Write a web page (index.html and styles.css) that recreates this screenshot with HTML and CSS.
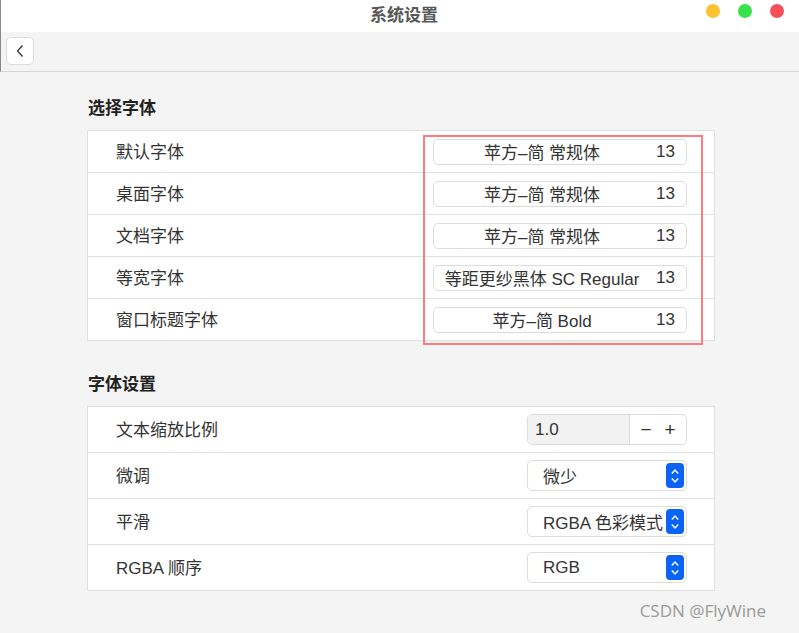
FILE: index.html
```html
<!DOCTYPE html>
<html lang="zh-CN">
<head>
<meta charset="utf-8">
<title>系统设置</title>
<link rel="stylesheet" href="styles.css">
</head>
<body>
<div class="window">
  <header class="titlebar">
    <div class="title">系统设置</div>
    <div class="lights">
      <span class="light yellow"></span>
      <span class="light green"></span>
      <span class="light red"></span>
    </div>
  </header>
  <div class="toolbar">
    <button class="back" aria-label="返回">
      <svg width="10" height="14" viewBox="0 0 10 14"><path d="M7.5 1.5 L2.5 7 L7.5 12.5" fill="none" stroke="#333" stroke-width="1.3"/></svg>
    </button>
  </div>
  <main class="content">
    <h2 class="section-title">选择字体</h2>
    <div class="card fonts-card">
      <div class="row font-row"><span class="label">默认字体</span><div class="font-btn"><span class="fname">苹方–简 常规体</span><span class="fsize">13</span></div></div>
      <div class="row font-row"><span class="label">桌面字体</span><div class="font-btn"><span class="fname">苹方–简 常规体</span><span class="fsize">13</span></div></div>
      <div class="row font-row"><span class="label">文档字体</span><div class="font-btn"><span class="fname">苹方–简 常规体</span><span class="fsize">13</span></div></div>
      <div class="row font-row"><span class="label">等宽字体</span><div class="font-btn"><span class="fname">等距更纱黑体 SC Regular</span><span class="fsize">13</span></div></div>
      <div class="row font-row"><span class="label">窗口标题字体</span><div class="font-btn"><span class="fname">苹方–简 Bold</span><span class="fsize">13</span></div></div>
      <div class="highlight"></div>
    </div>

    <h2 class="section-title second">字体设置</h2>
    <div class="card">
      <div class="row set-row"><span class="label">文本缩放比例</span>
        <div class="spin"><span class="spin-value">1.0</span><span class="spin-btns"><span>−</span><span>+</span></span></div>
      </div>
      <div class="row set-row"><span class="label">微调</span>
        <div class="select"><span class="sel-text">微少</span><span class="sel-arrow"><svg width="10" height="20" viewBox="0 0 10 20"><path d="M1.8 7.5 L5 4 L8.2 7.5 M1.8 12.5 L5 16 L8.2 12.5" fill="none" stroke="#fff" stroke-width="1.4"/></svg></span></div>
      </div>
      <div class="row set-row"><span class="label">平滑</span>
        <div class="select"><span class="sel-text">RGBA 色彩模式</span><span class="sel-arrow"><svg width="10" height="20" viewBox="0 0 10 20"><path d="M1.8 7.5 L5 4 L8.2 7.5 M1.8 12.5 L5 16 L8.2 12.5" fill="none" stroke="#fff" stroke-width="1.4"/></svg></span></div>
      </div>
      <div class="row set-row"><span class="label">RGBA 顺序</span>
        <div class="select"><span class="sel-text">RGB</span><span class="sel-arrow"><svg width="10" height="20" viewBox="0 0 10 20"><path d="M1.8 7.5 L5 4 L8.2 7.5 M1.8 12.5 L5 16 L8.2 12.5" fill="none" stroke="#fff" stroke-width="1.4"/></svg></span></div>
      </div>
    </div>
  </main>
  <div class="watermark">CSDN @FlyWine</div>
</div>
</body>
</html>
```

FILE: styles.css
```css
* { box-sizing: border-box; }
html, body { margin: 0; padding: 0; }
body {
  width: 799px;
  height: 633px;
  overflow: hidden;
  background: #f4f4f4;
  font-family: "Liberation Sans", "Noto Sans CJK SC", sans-serif;
  color: #333;
}
.window {
  position: relative;
  height: 633px;
}
.titlebar {
  height: 32px;
  background: #fff;
  display: flex;
  align-items: center;
  justify-content: center;
  position: relative;
  border-left: 1px solid #8a8a8a;
}
.title {
  font-size: 17px;
  font-weight: bold;
  color: #585858;
  padding-left: 8px;
  line-height: 32px;
}
.lights {
  position: absolute;
  right: 15px;
  top: 4px;
  display: flex;
  gap: 18px;
}
.light {
  width: 14px;
  height: 14px;
  border-radius: 50%;
  display: block;
}
.yellow { background: #fdc232; }
.green { background: #38e24a; }
.red { background: #f54f59; }
.toolbar {
  height: 40px;
  background: #f4f4f4;
  border-bottom: 1px solid #d6d6d6;
  border-left: 1px solid #8a8a8a;
  padding: 5px 0 0 5px;
}
.back {
  width: 28px;
  height: 28px;
  background: #fff;
  border: 1px solid #dedede;
  border-radius: 5px;
  padding: 0;
  display: flex;
  align-items: center;
  justify-content: center;
}
.content {
  padding: 24px 0 0 87px;
  width: 715px;
}
.section-title {
  margin: 0 0 10px 1px;
  padding-top: 2px;
  font-size: 17px;
  font-weight: bold;
  line-height: 22px;
  color: #222;
}
.section-title.second {
  margin-top: 31px;
  margin-bottom: 10px;
}
.card {
  position: relative;
  background: #fff;
  border: 1px solid #e0e0e0;
}
.row {
  display: flex;
  align-items: center;
  justify-content: space-between;
  padding: 0 27px 0 28px;
  border-top: 1px solid #e0e0e0;
}
.row:first-child { border-top: none; }
.font-row { height: 42px; }
.font-row:first-child { height: 41px; }
.set-row { height: 46px; }
.set-row:first-child { height: 45px; }
.label {
  font-size: 17px;
  color: #333;
  line-height: 20px;
  padding-top: 2px;
}
.set-row .label { padding-top: 3px; }
.font-btn {
  width: 254px;
  height: 26px;
  border: 1px solid #dcdcdc;
  border-radius: 5px;
  background: #fff;
  display: flex;
  align-items: center;
  font-size: 17px;
  color: #333;
  white-space: nowrap;
}
.fname {
  flex: 1;
  text-align: center;
  overflow: hidden;
}
.fsize {
  padding: 0 11px 0 6px;
}
.highlight {
  position: absolute;
  left: 335px;
  top: 4px;
  width: 280px;
  height: 210px;
  border: 2px solid #ff7b7e;
  pointer-events: none;
}
.spin {
  width: 160px;
  height: 31px;
  border: 1px solid #dcdcdc;
  border-radius: 5px;
  display: flex;
  overflow: hidden;
  font-size: 17px;
  color: #333;
}
.spin-value {
  width: 102px;
  background: #f2f2f2;
  border-right: 1px solid #dcdcdc;
  display: flex;
  align-items: center;
  padding-left: 7px;
}
.spin-btns {
  flex: 1;
  display: flex;
  align-items: center;
  justify-content: space-around;
  padding: 0 4px;
  font-size: 19px;
}
.select {
  width: 160px;
  height: 31px;
  border: 1px solid #dcdcdc;
  border-radius: 5px;
  display: flex;
  align-items: center;
  justify-content: space-between;
  padding: 0 2px 0 15px;
  font-size: 17px;
  color: #333;
  white-space: nowrap;
  background: #fff;
}
.sel-text { overflow: hidden; }
.sel-arrow {
  width: 18px;
  height: 25px;
  flex: none;
  background: #0b63f6;
  border-radius: 4px;
  display: flex;
  align-items: center;
  justify-content: center;
}
.watermark {
  position: absolute;
  right: 33px;
  top: 599px;
  font-family: "Open Sans", "Noto Sans", sans-serif;
  font-size: 17px;
  color: #9a9a9a;
}
```
